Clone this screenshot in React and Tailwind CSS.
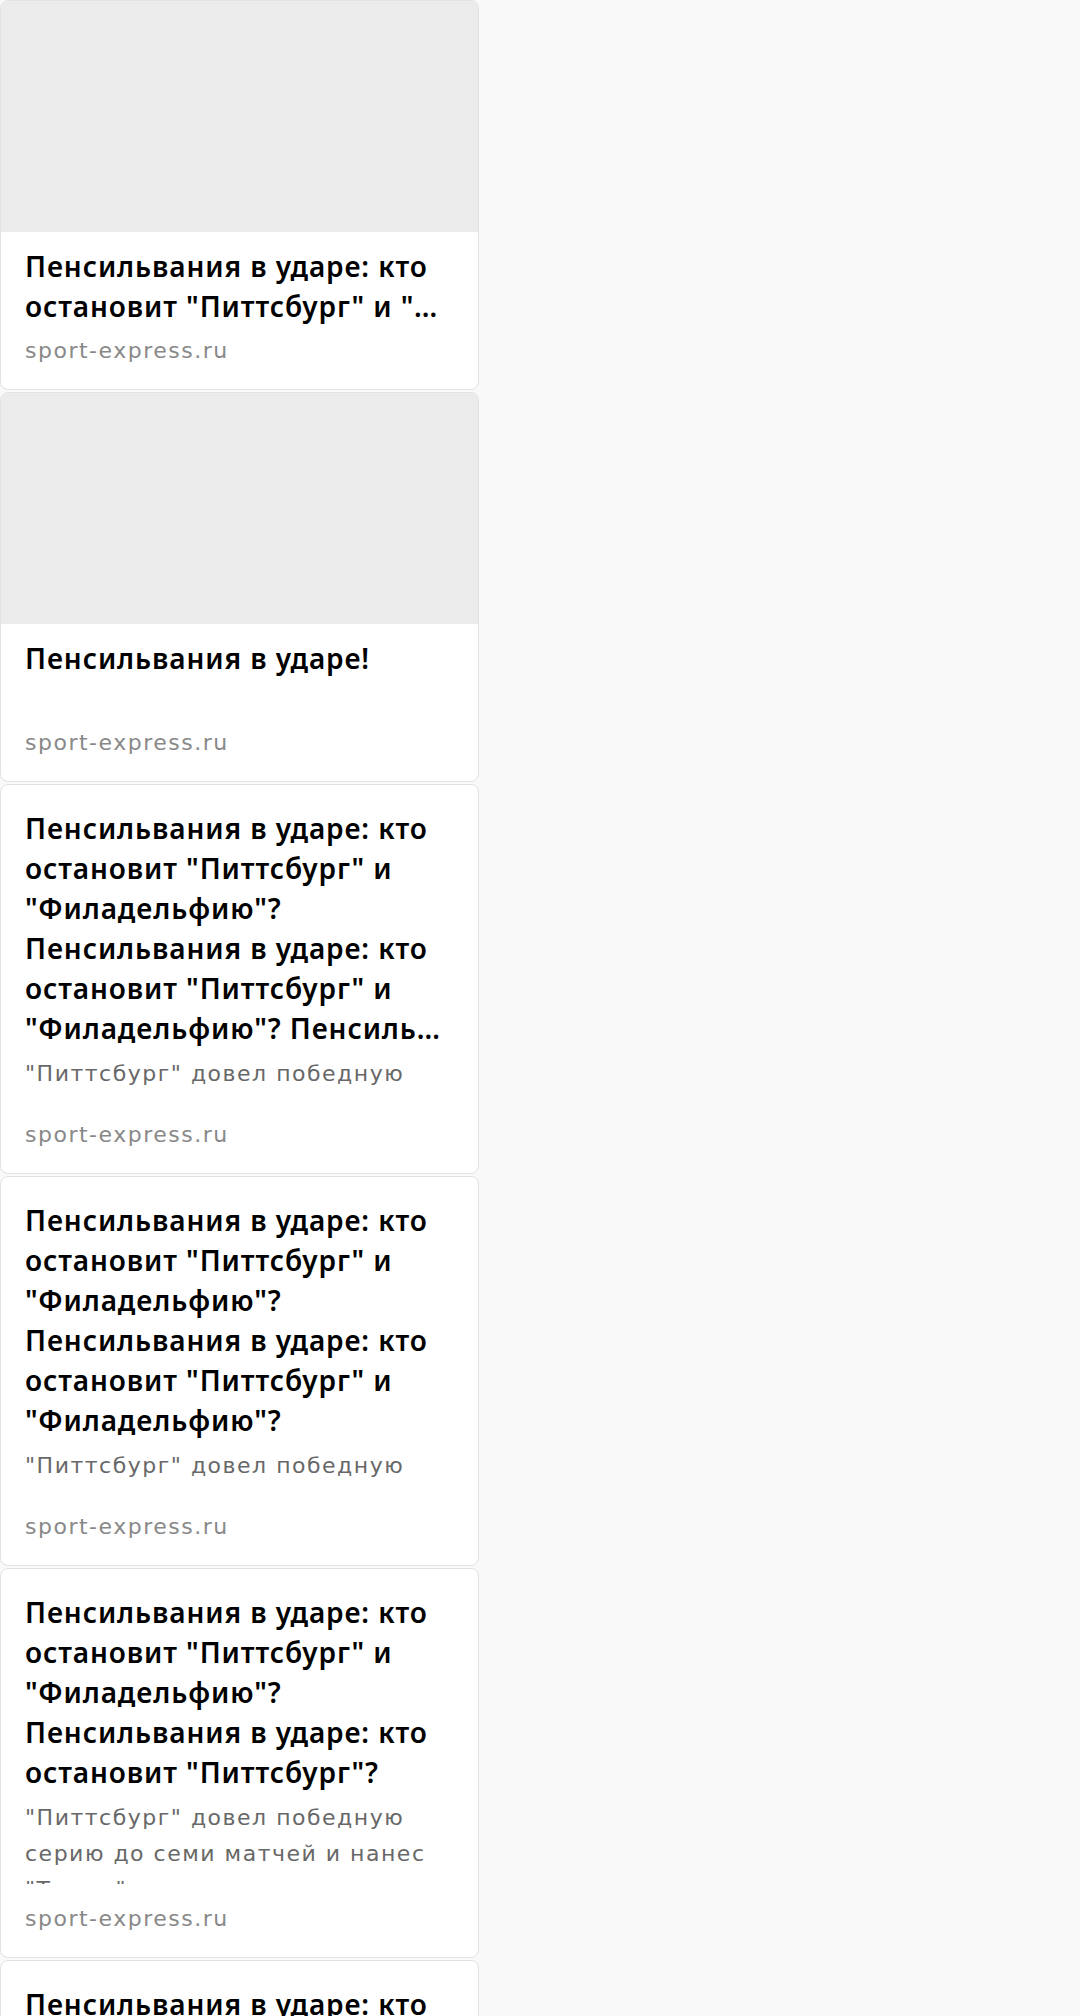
const DESC =
  '"Питтсбург" довел победную серию до семи матчей и нанес "Тампе" очередное поражение, а "Филадельфия" обыграла "Бостон".'

const L1 = 'Пенсильвания в ударе: кто'
const L2 = 'остановит "Питтсбург" и'
const L3 = '"Филадельфию"?'

const cards = [
  { image: true, lines: [L1, 'остановит "Питтсбург" и "Филадельфию"?'] },
  { image: true, lines: ['Пенсильвания в ударе!'] },
  { lines: [L1, L2, L3, L1, L2, '"Филадельфию"? Пенсильвания в ударе: кто остановит'], desc: DESC },
  { lines: [L1, L2, L3, L1, L2, L3], desc: DESC },
  { lines: [L1, L2, L3, L1, 'остановит "Питтсбург"?'], desc: DESC },
  { lines: [L1, L2, L3, L1, L2, '"Филадельфию"? Пенсильвания в ударе: кто остановит'], desc: DESC },
]

const titleCls = "font-['Noto_Sans',sans-serif] text-[28px] font-semibold leading-10 tracking-[0.9px] text-black"
const textCls = "font-['DejaVu_Sans',sans-serif] text-[22px] tracking-[1.5px]"

function Title({ lines }) {
  return (
    <h3 className={titleCls}>
      {lines.map((l, i) => (
        <span key={i} className="block truncate">
          {l}
        </span>
      ))}
    </h3>
  )
}

function Source() {
  return <div className={`px-6 pb-[22px] leading-8 text-[#888] ${textCls}`}>sport-express.ru</div>
}

function Card({ card }) {
  if (card.image) {
    return (
      <div className="mb-[2px] flex h-[390px] w-[479px] flex-col overflow-hidden rounded-lg border border-[#e2e2e2] bg-white">
        <div className="h-[231px] shrink-0 bg-[#ebebeb]" />
        <div className="px-6 pt-[14px]">
          <Title lines={card.lines} />
        </div>
        <div className="mt-auto">
          <Source />
        </div>
      </div>
    )
  }
  return (
    <div className="mb-[2px] flex h-[390px] w-[479px] flex-col overflow-hidden rounded-lg border border-[#e2e2e2] bg-white">
      <div className="h-[315px] shrink-0 overflow-hidden px-6 pt-[23px]">
        <Title lines={card.lines} />
        <p className={`mt-2 leading-9 text-[#686868] ${textCls}`}>{card.desc}</p>
      </div>
      <div className="mt-auto">
        <Source />
      </div>
    </div>
  )
}

export default function App() {
  return (
    <div className="min-h-screen bg-[#f9f9f9]">
      {cards.map((c, i) => (
        <Card key={i} card={c} />
      ))}
    </div>
  )
}
